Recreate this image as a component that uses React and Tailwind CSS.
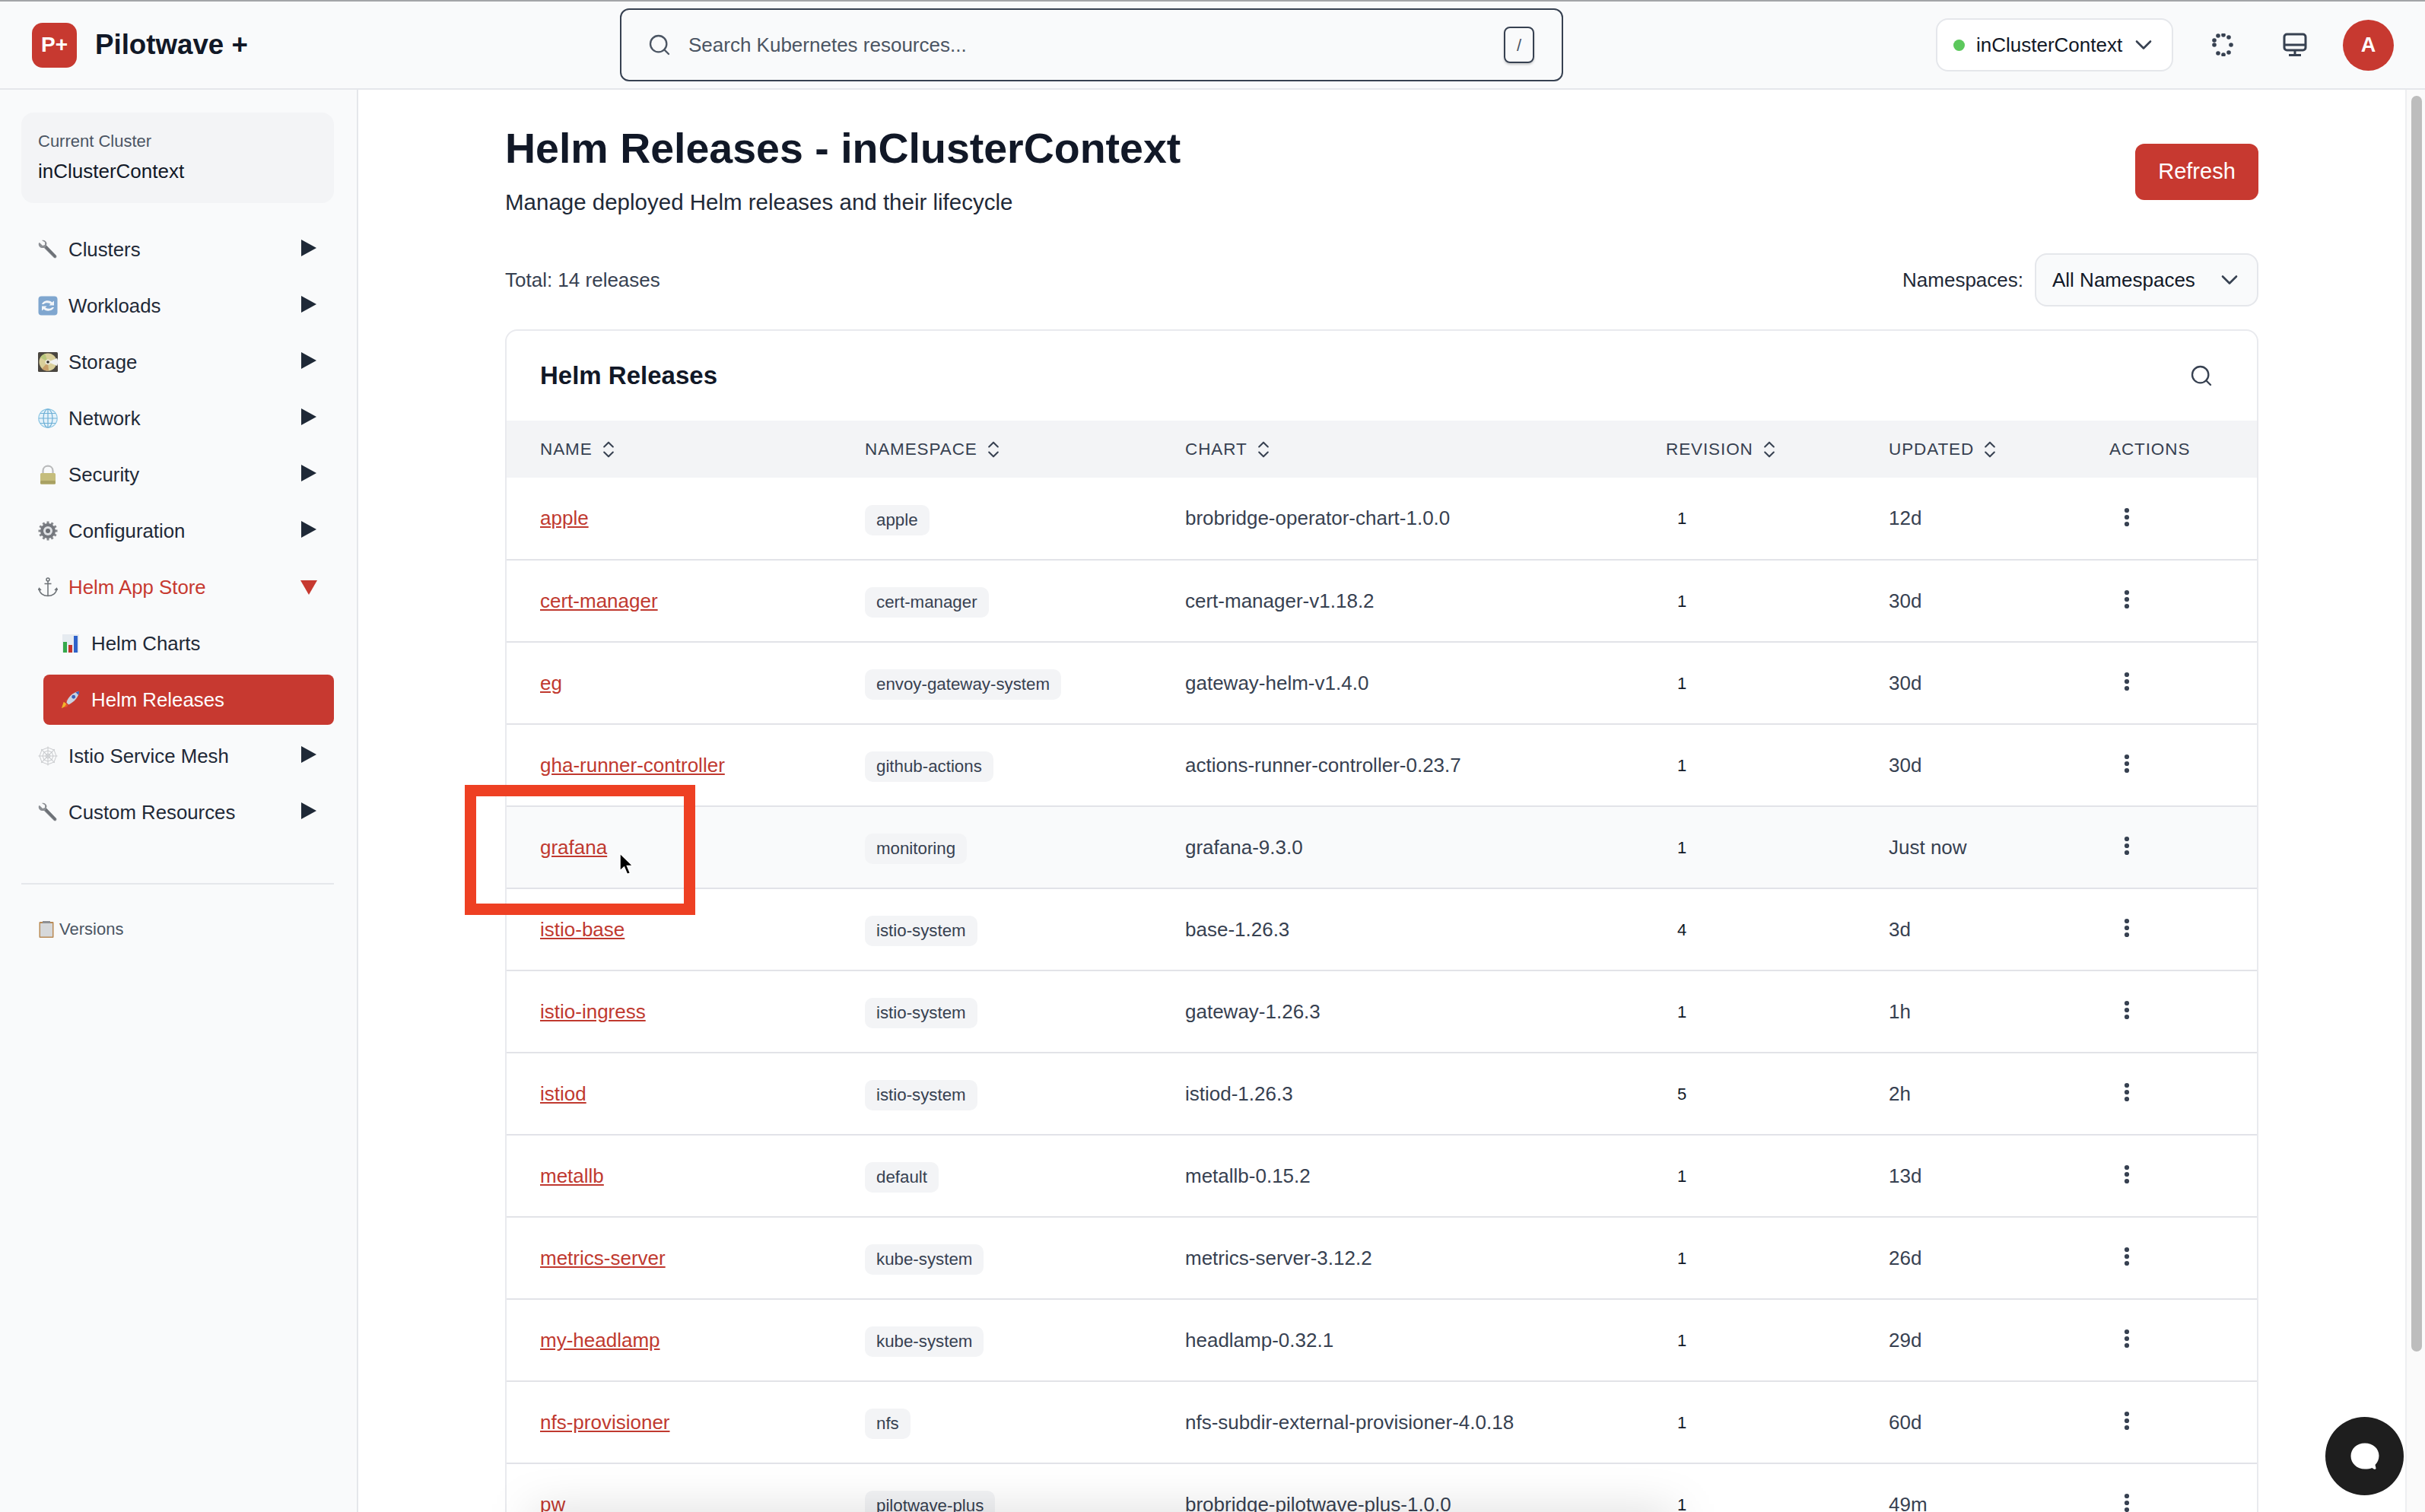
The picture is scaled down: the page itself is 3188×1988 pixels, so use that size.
import React from "react";
import { ChevronDown, ChevronsUpDown, Search } from "lucide-react";

const RELEASES = [
  { name: "apple", ns: "apple", chart: "brobridge-operator-chart-1.0.0", rev: "1", updated: "12d" },
  { name: "cert-manager", ns: "cert-manager", chart: "cert-manager-v1.18.2", rev: "1", updated: "30d" },
  { name: "eg", ns: "envoy-gateway-system", chart: "gateway-helm-v1.4.0", rev: "1", updated: "30d" },
  { name: "gha-runner-controller", ns: "github-actions", chart: "actions-runner-controller-0.23.7", rev: "1", updated: "30d" },
  { name: "grafana", ns: "monitoring", chart: "grafana-9.3.0", rev: "1", updated: "Just now", hover: true },
  { name: "istio-base", ns: "istio-system", chart: "base-1.26.3", rev: "4", updated: "3d" },
  { name: "istio-ingress", ns: "istio-system", chart: "gateway-1.26.3", rev: "1", updated: "1h" },
  { name: "istiod", ns: "istio-system", chart: "istiod-1.26.3", rev: "5", updated: "2h" },
  { name: "metallb", ns: "default", chart: "metallb-0.15.2", rev: "1", updated: "13d" },
  { name: "metrics-server", ns: "kube-system", chart: "metrics-server-3.12.2", rev: "1", updated: "26d" },
  { name: "my-headlamp", ns: "kube-system", chart: "headlamp-0.32.1", rev: "1", updated: "29d" },
  { name: "nfs-provisioner", ns: "nfs", chart: "nfs-subdir-external-provisioner-4.0.18", rev: "1", updated: "60d" },
  { name: "pw", ns: "pilotwave-plus", chart: "brobridge-pilotwave-plus-1.0.0", rev: "1", updated: "49m" },
];

// the sidebar uses OS emoji in the original, drawn by hand here
function WrenchIcon() {
  return (
    <svg width="26" height="26" viewBox="0 0 26 26">
      <path d="M2 4 L6 8 L9 7 L9 3.5 L5 1 C8 0 11 2 11.5 5 L11 7.5 L24 21 C25.5 23 23 25.5 21 24 L8 11 L5 11 C2 10.5 0 7.5 1 4.5 Z" fill="#8c8f94" />
      <path d="M11 8 L24 21.5 L22 24 L9 11 Z" fill="#6d7177" />
    </svg>
  );
}

function CycleIcon() {
  return (
    <svg width="26" height="26" viewBox="0 0 26 26">
      <rect x="0.5" y="0.5" width="25" height="25" rx="4" fill="#7fa6cf" />
      <path d="M5 11 C6.5 6.5 14 4.5 18.5 8.5 L21 6.5 L21 12.5 L14.5 12.5 L16.5 10.5 C13 8.5 9 9 7.5 11 Z" fill="#f2f5f9" />
      <path d="M21 15 C19.5 19.5 12 21.5 7.5 17.5 L5 19.5 L5 13.5 L11.5 13.5 L9.5 15.5 C13 17.5 17 17 18.5 15 Z" fill="#f2f5f9" />
    </svg>
  );
}

function DiscIcon() {
  return (
    <svg width="26" height="26" viewBox="0 0 26 26">
      <rect width="26" height="26" rx="1.5" fill="#4a4640" />
      <circle cx="13" cy="13" r="11.5" fill="#d9cf9a" />
      <path d="M13 13 L25 8 A12 12 0 0 1 25 18 Z" fill="#f1f2f0" />
      <path d="M13 13 L3 7 A12 12 0 0 1 9 2 Z" fill="#b7c77c" />
      <path d="M13 13 L5 22 A12 12 0 0 0 14 24.5 Z" fill="#c79f6a" />
      <circle cx="13" cy="13" r="3.6" fill="#ece8d8" />
      <circle cx="13" cy="13" r="1.8" fill="#2c2a26" />
    </svg>
  );
}

function GlobeIcon() {
  return (
    <svg width="26" height="26" viewBox="0 0 26 26" fill="none">
      <circle cx="13" cy="13" r="12.2" fill="#e4f2fa" stroke="#8cc6e4" strokeWidth="1.2" />
      <g stroke="#6fb0d6" strokeWidth="1.2">
        <ellipse cx="13" cy="13" rx="6" ry="12" />
        <path d="M13 1V25M1 13H25M3 6.5H23M3 19.5H23" />
      </g>
    </svg>
  );
}

function LockIcon() {
  return (
    <svg width="26" height="26" viewBox="0 0 26 26" fill="none">
      <path d="M6.5 12 V8 C6.5 -0.5 19.5 -0.5 19.5 8 V12" stroke="#b9babb" strokeWidth="2.2" />
      <rect x="3" y="11" width="20" height="14.5" rx="1.5" fill="#c5bd7c" />
      <rect x="3" y="21" width="20" height="4.5" rx="1.5" fill="#a9a163" />
    </svg>
  );
}

function GearIcon() {
  const teeth = [0, 30, 60, 90, 120, 150, 180, 210, 240, 270, 300, 330];
  return (
    <svg width="26" height="26" viewBox="0 0 26 26">
      {teeth.map((deg) => (
        <rect key={deg} x="11.5" y="0.5" width="3" height="5" fill="#85878c" transform={`rotate(${deg} 13 13)`} />
      ))}
      <circle cx="13" cy="13" r="10" fill="#75787e" />
      <circle cx="13" cy="13" r="6" fill="#dfe1e4" />
      <circle cx="13" cy="13" r="3" fill="#6b6e74" />
    </svg>
  );
}

function AnchorIcon() {
  return (
    <svg width="26" height="26" viewBox="0 0 26 26" fill="none" stroke="#6b7075" strokeWidth="1.5">
      <circle cx="13" cy="3" r="2" />
      <path d="M13 5V24.5M8.5 8.5H17.5M1.5 15.5C2 21 7 24.5 13 24.5C19 24.5 24 21 24.5 15.5" />
      <path d="M0.5 17L1.5 14.5L4 17M22 17L24.5 14.5L25.5 17" />
    </svg>
  );
}

function ChartIcon() {
  return (
    <svg width="22" height="24" viewBox="0 0 22 24">
      <rect width="22" height="24" fill="#e6ebf0" />
      <rect x="1" y="10" width="5" height="14" fill="#35a84a" />
      <rect x="8" y="14" width="5" height="10" fill="#c5352c" />
      <rect x="15" y="2" width="5" height="22" fill="#2f62c9" />
    </svg>
  );
}

function RocketIcon() {
  return (
    <svg width="28" height="26" viewBox="0 0 28 26">
      <path d="M1 25 L4 16 L7 18 L9 21 Z" fill="#f0b429" />
      <path d="M5 24 L8 18 L10 20 L9 23 Z" fill="#e5532d" />
      <path d="M6 14 L11 12 L10 17 Z" fill="#d84a3a" />
      <path d="M13 20 L15 15 L10 17 Z" fill="#d84a3a" />
      <path d="M8 17 C10 9 17 3 26 1 C25 10 19 16 11 20 Z" fill="#c9d2e0" />
      <path d="M21 2.5 C23 2 25 1.5 26 1 C25.8 3 25.4 5 25 6.5 Z" fill="#3c5fb8" />
      <circle cx="18" cy="9" r="2.6" fill="#3c5fb8" />
    </svg>
  );
}

function WebIcon() {
  const spokes = [0, 45, 90, 135];
  return (
    <svg width="26" height="26" viewBox="0 0 26 26" fill="none" stroke="#c9cbce" strokeWidth="1">
      {spokes.map((deg) => (
        <path key={deg} d="M13 0.5V25.5" transform={`rotate(${deg} 13 13)`} />
      ))}
      <path d="M13 2L21 5L24 13L21 21L13 24L5 21L2 13L5 5Z" />
      <path d="M13 6L18 8L20 13L18 18L13 20L8 18L6 13L8 8Z" />
      <path d="M13 10L15 11L16 13L15 15L13 16L11 15L10 13L11 11Z" />
    </svg>
  );
}

function ClipboardIcon() {
  return (
    <svg width="20" height="22" viewBox="0 0 20 22">
      <rect x="0.5" y="1" width="19" height="21" rx="1" fill="#b98a55" />
      <rect x="2" y="3" width="16" height="17.5" fill="#d6d8da" />
      <rect x="5" y="0" width="10" height="3" fill="#8d8f92" />
    </svg>
  );
}

const SIDEBAR_ITEMS = [
  { label: "Clusters", icon: <WrenchIcon /> },
  { label: "Workloads", icon: <CycleIcon /> },
  { label: "Storage", icon: <DiscIcon /> },
  { label: "Network", icon: <GlobeIcon /> },
  { label: "Security", icon: <LockIcon /> },
  { label: "Configuration", icon: <GearIcon /> },
  { label: "Helm App Store", icon: <AnchorIcon />, open: true },
  { label: "Helm Charts", icon: <ChartIcon />, sub: true },
  { label: "Helm Releases", icon: <RocketIcon />, sub: true, active: true },
  { label: "Istio Service Mesh", icon: <WebIcon /> },
  { label: "Custom Resources", icon: <WrenchIcon /> },
];

function NavItem({ item }) {
  if (item.sub) {
    return (
      <div className={`ml-[29px] h-[66px] flex items-center gap-[14px] pl-[23px] rounded-[8px] text-[25.8px] ${item.active ? "bg-[#c73930] text-white" : "text-[#1f2937]"}`}>
        <span className="w-[26px] flex justify-center">{item.icon}</span>
        <span>{item.label}</span>
      </div>
    );
  }
  return (
    <div className={`h-[66px] flex items-center gap-[14px] pl-[22px] pr-[23px] text-[25.8px] ${item.open ? "text-[#c73930]" : "text-[#1f2937]"}`}>
      <span className="w-[26px] flex justify-center">{item.icon}</span>
      <span className="flex-1">{item.label}</span>
      {item.open ? (
        <svg width="22" height="19" viewBox="0 0 22 19" className="-mr-[1px]"><path d="M0 0H22L11 19Z" fill="#c73930" /></svg>
      ) : (
        <svg width="20" height="22" viewBox="0 0 20 22" className="-mt-[4px]"><path d="M0 0L20 11L0 22Z" fill="#1f2937" /></svg>
      )}
    </div>
  );
}

function Sidebar() {
  return (
    <aside className="w-[471px] shrink-0 bg-[#f9fafb] border-r-2 border-[#e5e7eb] pl-[28px] pr-[30px] pt-[30px]">
      <div className="h-[119px] bg-[#f3f4f6] rounded-[16px] pl-[22px] pt-[23px]">
        <div className="text-[22px] leading-[30px] text-[#4b5563]">Current Cluster</div>
        <div className="mt-[8px] text-[26px] leading-[32px] text-[#111827]">inClusterContext</div>
      </div>
      <nav className="mt-[28px] flex flex-col gap-[8px]">
        {SIDEBAR_ITEMS.map((item) => (
          <NavItem key={item.label} item={item} />
        ))}
      </nav>
      <div className="mt-[60px] h-[2px] bg-[#e5e7eb]" />
      <div className="mt-[46px] pl-[23px] flex items-center gap-[7px] text-[22px] leading-[26px] text-[#4b5563]">
        <ClipboardIcon />
        <span>Versions</span>
      </div>
    </aside>
  );
}

function SpinnerDots() {
  const dots = [
    [9, 3], [16, 2], [23, 5], [26, 15], [23, 25], [16, 28], [9, 26], [4, 15], [4, 9],
  ];
  return (
    <svg width="30" height="30" viewBox="0 0 30 30">
      {dots.map(([cx, cy]) => (
        <circle key={`${cx}-${cy}`} cx={cx} cy={cy} r="2.8" fill="#374151" />
      ))}
    </svg>
  );
}

function MonitorIcon() {
  return (
    <svg width="32" height="32" viewBox="0 0 32 32" fill="none" stroke="#374151" strokeWidth="3">
      <rect x="2" y="2" width="28" height="21" rx="3.5" />
      <path d="M2 16H30M16 23V29M8 29.5H24" />
    </svg>
  );
}

function Header() {
  return (
    <header className="h-[118px] shrink-0 flex items-center bg-[#f9fafb] border-t-2 border-b-2 border-t-[#a3a5a8] border-b-[#e5e7eb]">
      <div className="w-[815px] shrink-0 pl-[42px] flex items-center gap-[24px]">
        <div className="w-[59px] h-[59px] rounded-[14px] bg-[#c73930] flex items-center justify-center text-white font-bold text-[28px]">P+</div>
        <span className="text-[36.7px] font-bold text-[#111827]">Pilotwave +</span>
      </div>
      <div className="w-[1240px] h-[96px] shrink-0 flex items-center pl-[34px] pr-[36px] border-2 border-[#374151] rounded-[12px] bg-[#f9fafb]">
        <Search size={32} strokeWidth={1.75} className="text-[#4b5563] shrink-0" />
        <span className="ml-[22px] flex-1 text-[26px] text-[#4b5563]">Search Kubernetes resources...</span>
        <kbd className="w-[40px] h-[48px] flex items-center justify-center border-2 border-[#374151] rounded-[8px] text-[22px] text-[#4b5563] shadow-[0_2px_3px_rgba(0,0,0,0.2)] font-['Liberation_Sans',sans-serif]">/</kbd>
      </div>
      <div className="ml-[490px] h-[70px] w-[312px] shrink-0 flex items-center pl-[21px] bg-white border-2 border-[#e5e7eb] rounded-[16px]">
        <span className="w-[15px] h-[15px] rounded-full bg-[#5cc85c]" />
        <span className="ml-[15px] text-[26px] text-[#111827]">inClusterContext</span>
        <ChevronDown size={36} strokeWidth={1.75} className="ml-[10px] text-[#374151]" />
      </div>
      <div className="ml-[50px]"><SpinnerDots /></div>
      <div className="ml-[64px]"><MonitorIcon /></div>
      <div className="ml-[47px] w-[67px] h-[67px] rounded-full bg-[#c73930] flex items-center justify-center text-white font-bold text-[27px]">A</div>
    </header>
  );
}

function SortHead({ children, sortable = true }) {
  return (
    <th className="pl-[44px] text-left font-normal">
      <div className="flex items-center gap-[7px] text-[22.5px] tracking-[0.04em] text-[#374151]">
        <span>{children}</span>
        {sortable && <ChevronsUpDown size={28} strokeWidth={1.75} className="text-[#374151]" />}
      </div>
    </th>
  );
}

function ReleaseRow({ row }) {
  return (
    <tr className={`h-[108px] border-b-2 border-[#e2e3e8] ${row.hover ? "bg-[#f9fafb]" : ""}`}>
      <td className="pl-[44px] text-[26px]">
        <a className="text-[#c0392f] underline">{row.name}</a>
      </td>
      <td className="pl-[44px]">
        <span className="inline-flex items-center h-[40px] mt-[4px] px-[15px] rounded-[10px] bg-[#f3f4f6] text-[22.3px] text-[#374151]">{row.ns}</span>
      </td>
      <td className="pl-[44px] text-[26px] text-[#374151]">{row.chart}</td>
      <td className="pl-[59px] text-[22px] text-[#111827]">{row.rev}</td>
      <td className="pl-[44px] text-[26px] text-[#374151]">{row.updated}</td>
      <td className="pl-[44px]">
        <svg width="24" height="30" viewBox="0 0 24 30" className="ml-[11px] -mt-[4px]">
          <circle cx="12" cy="6" r="3.1" fill="#374151" />
          <circle cx="12" cy="15" r="3.1" fill="#374151" />
          <circle cx="12" cy="24" r="3.1" fill="#374151" />
        </svg>
      </td>
    </tr>
  );
}

function ReleasesCard() {
  return (
    <section className="mt-[30px] bg-white border-2 border-[#e9eaee] rounded-[16px]">
      <div className="h-[118px] flex items-center justify-between pl-[44px] pr-[57px]">
        <h2 className="text-[33px] font-bold text-[#111827]">Helm Releases</h2>
        <Search size={32} strokeWidth={1.75} className="text-[#374151]" />
      </div>
      <table className="w-full table-fixed border-collapse">
        <colgroup>
          <col className="w-[427px]" />
          <col className="w-[421px]" />
          <col className="w-[632px]" />
          <col className="w-[293px]" />
          <col className="w-[290px]" />
          <col />
        </colgroup>
        <thead>
          <tr className="h-[75px] bg-[#f3f4f6]">
            <SortHead>NAME</SortHead>
            <SortHead>NAMESPACE</SortHead>
            <SortHead>CHART</SortHead>
            <SortHead>REVISION</SortHead>
            <SortHead>UPDATED</SortHead>
            <SortHead sortable={false}>ACTIONS</SortHead>
          </tr>
        </thead>
        <tbody>
          {RELEASES.map((row) => (
            <ReleaseRow key={row.name} row={row} />
          ))}
        </tbody>
      </table>
    </section>
  );
}

function Main() {
  return (
    <main className="relative flex-1 min-w-0 overflow-hidden bg-white pl-[193px] pr-[193px] pt-[40px]">
      <div className="flex items-start justify-between">
        <div>
          <h1 className="text-[55.5px] leading-[74px] font-bold text-[#111827]">Helm Releases - inClusterContext</h1>
          <p className="mt-[16px] text-[29.5px] leading-[36px] text-[#1f2937]">Manage deployed Helm releases and their lifecycle</p>
        </div>
        <button className="mt-[31px] w-[162px] h-[74px] rounded-[12px] bg-[#c73930] text-white text-[29px]">Refresh</button>
      </div>
      <div className="mt-[49px] flex items-center justify-between">
        <span className="text-[26px] text-[#374151]">Total: 14 releases</span>
        <div className="flex items-center gap-[15px]">
          <span className="text-[26px] text-[#1f2937]">Namespaces:</span>
          <div className="w-[294px] h-[70px] flex items-center pl-[21px] bg-[#f9fafb] border-2 border-[#e5e7eb] rounded-[16px]">
            <span className="flex-1 text-[26px] text-[#111827]">All Namespaces</span>
            <ChevronDown size={36} strokeWidth={1.75} className="mr-[18px] text-[#374151]" />
          </div>
        </div>
      </div>
      <ReleasesCard />
    </main>
  );
}

function Scrollbar() {
  return (
    <div className="w-[26px] shrink-0 bg-[#fafafa] border-l-2 border-[#eeeff1] pl-[6px] pt-[8px]">
      <div className="w-[14px] h-[1651px] rounded-full bg-[#bdbdbd]" />
    </div>
  );
}

export default function App() {
  return (
    <div className="relative w-[3188px] h-[1988px] overflow-hidden flex flex-col font-['Liberation_Sans',sans-serif]">
      <Header />
      <div className="flex-1 min-h-0 flex">
        <Sidebar />
        <Main />
        <Scrollbar />
      </div>

      {/* soft shadow along the bottom of the recording */}
      <div className="absolute left-[700px] top-[1992px] w-[1500px] h-[30px] bg-black/20 blur-[30px]" />

      {/* annotation drawn on the recording */}
      <div className="absolute left-[611px] top-[1032px] w-[303px] h-[171px] border-[15px] border-[#ee4023]" />
      <svg width="20" height="30" viewBox="0 0 20 30" className="absolute left-[814px] top-[1121px]">
        <path d="M1 1V24L6.5 19L10.5 28.5L14.5 27L10.5 17.5H18Z" fill="#000" stroke="#fff" strokeWidth="1.5" />
      </svg>

      <button className="absolute left-[3057px] top-[1863px] w-[103px] h-[103px] rounded-full bg-[#1e1e1e] flex items-center justify-center">
        <svg width="38" height="36" viewBox="0 0 38 36">
          <path d="M19 0.5C29.5 0.5 37.5 7.5 37.5 17C37.5 22 35.5 26 32.5 29L33.5 33.5C33.5 35 31 35.5 28.5 33C26 34 22.5 34.5 19 34.5C8.5 34.5 0.5 27 0.5 17.5C0.5 7.5 8.5 0.5 19 0.5Z" fill="#fff" />
        </svg>
      </button>
    </div>
  );
}
